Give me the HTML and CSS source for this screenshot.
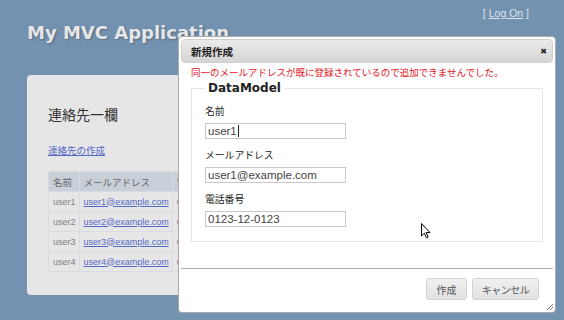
FILE: index.html
```html
<!DOCTYPE html>
<html>
<head>
    <meta content="text/html; charset=UTF-8" http-equiv="content-type">
    <title>連絡先一欄 - My MVC Application</title>
    <link rel="stylesheet" href="styles.css">
</head>
<body>
    <div class="header">
        <h1 class="site-title">My MVC Application</h1>
        <div class="logon">[ <a href="#">Log On</a> ]</div>
    </div>

    <div class="main">
        <h2>連絡先一欄</h2>
        <p class="create-link"><a href="#">連絡先の作成</a></p>

        <table class="contacts">
            <tr>
                <th>名前</th>
                <th>メールアドレス</th>
                <th>電話番号</th>
            </tr>
            <tr>
                <td class="name">user1</td>
                <td><a href="#">user1@example.com</a></td>
                <td>0123-12-0123</td>
            </tr>
            <tr>
                <td class="name">user2</td>
                <td><a href="#">user2@example.com</a></td>
                <td>0123-12-0123</td>
            </tr>
            <tr>
                <td class="name">user3</td>
                <td><a href="#">user3@example.com</a></td>
                <td>0123-12-0123</td>
            </tr>
            <tr>
                <td class="name">user4</td>
                <td><a href="#">user4@example.com</a></td>
                <td>0123-12-0123</td>
            </tr>
        </table>
    </div>

    <!-- modal dialog -->
    <div class="dialog">
        <div class="dialog-titlebar">
            <span class="dialog-title">新規作成</span>
            <span class="dialog-close">&#x2716;</span>
        </div>
        <div class="dialog-content">
            <div class="error">同一のメールアドレスが既に登録されているので追加できませんでした。</div>
            <fieldset>
                <legend>DataModel</legend>
                <div class="field">
                    <div class="field-label">名前</div>
                    <div class="text-box">user1<span class="caret"></span></div>
                </div>
                <div class="field">
                    <div class="field-label">メールアドレス</div>
                    <div class="text-box">user1@example.com</div>
                </div>
                <div class="field">
                    <div class="field-label">電話番号</div>
                    <div class="text-box">0123-12-0123</div>
                </div>
            </fieldset>
        </div>
        <div class="dialog-buttons">
            <button class="btn btn-create">作成</button>
            <button class="btn btn-cancel">キャンセル</button>
        </div>
        <svg class="resize-handle" width="7" height="7" viewBox="0 0 7 7">
            <path d="M1 7 L7 1 M4 7 L7 4" stroke="#777" stroke-width="1" fill="none"/>
        </svg>
    </div>

    <!-- mouse pointer -->
    <svg class="cursor" width="10" height="16" viewBox="0 0 10 16">
        <path d="M0.5 0.5 V13 L3.4 10.2 L5.4 14.8 L7.1 14 L5.1 9.6 H9 Z" fill="#fff" stroke="#000" stroke-width="1" stroke-linejoin="round"/>
    </svg>
</body>
</html>
```

FILE: styles.css
```css
body {
    margin: 0;
    background-color: #7392b0;
    font-family: "Liberation Sans", "Noto Sans CJK JP", sans-serif;
    color: #333;
}

a {
    color: #5368c6;
}

/* page header */
.header {
    display: flex;
    justify-content: space-between;
    align-items: flex-start;
    padding: 0 35px 0 27px;
}

.site-title {
    margin: 22px 0 0 0;
    font-family: "DejaVu Sans", sans-serif;
    font-size: 18px;
    line-height: 22px;
    font-weight: bold;
    color: #e6e6e6;
    text-shadow: 1px 1px 2px rgba(40, 50, 70, 0.45);
}

.logon {
    margin-top: 6px;
    font-size: 10.5px;
    line-height: 14px;
    color: #dde4ec;
}

.logon a {
    color: #dde4ec;
}

/* main panel */
.main {
    margin: 31px 0 0 27px;
    width: 492px;
    height: 220px;
    box-sizing: border-box;
    padding: 31px 21px 0 21px;
    background-color: #e6e6e6;
    border-radius: 4px;
}

.main h2 {
    margin: 0;
    font-size: 14px;
    line-height: 18px;
    font-weight: normal;
    color: #333;
}

.create-link {
    margin: 20px 0 0 0;
    font-size: 9.5px;
    line-height: 14px;
}

.contacts {
    margin-top: 13px;
    border-collapse: collapse;
    font-size: 9px;
}

.contacts th,
.contacts td {
    height: 19px;
    padding: 0 3px 0 4px;
    border: 1px solid #d8dce2;
    text-align: left;
    white-space: nowrap;
}

.contacts th {
    background-color: #c8cfd8;
    font-weight: normal;
    color: #666;
    font-size: 9.5px;
}

.contacts td {
    color: #808080;
}

.contacts td a {
    color: #5368c6;
}

/* dialog */
.dialog {
    position: absolute;
    left: 178px;
    top: 36px;
    width: 378px;
    height: 277px;
    box-sizing: border-box;
    padding: 2px;
    display: flex;
    flex-direction: column;
    background-color: #fff;
    border: 1px solid #aaa;
    border-radius: 4px;
    color: #222;
}

.dialog-titlebar {
    display: flex;
    justify-content: space-between;
    align-items: center;
    height: 24px;
    box-sizing: border-box;
    padding: 0 5px 0 9px;
    background: linear-gradient(#ebebeb, #d5d5d5);
    border: 1px solid #d0d0d0;
    border-radius: 4px;
}

.dialog-title {
    font-size: 10.5px;
    font-weight: bold;
    color: #222;
}

.dialog-close {
    font-family: "DejaVu Sans", sans-serif;
    font-size: 8px;
    color: #222;
}

.dialog-content {
    flex: 1;
    padding: 3px 10px 0 10px;
}

.error {
    font-size: 9.5px;
    line-height: 14px;
    color: #e3131b;
    white-space: nowrap;
}

fieldset {
    margin: 1px 0 0 0;
    padding: 0 13px 14px 13px;
    border: 1px solid #e6e6e6;
}

legend {
    padding: 0 3px;
    font-family: "DejaVu Sans", sans-serif;
    font-size: 12px;
    line-height: 14px;
    font-weight: bold;
    color: #222;
}

.field {
    margin-top: 11px;
}

.field-label {
    font-size: 9.8px;
    line-height: 12px;
    margin-bottom: 5px;
    color: #222;
}

.text-box {
    width: 141px;
    height: 16px;
    box-sizing: border-box;
    padding: 0 2px;
    border: 1px solid #c8c8c8;
    font-size: 11.5px;
    line-height: 14px;
    color: #444;
}

.caret {
    display: inline-block;
    width: 1px;
    height: 12px;
    margin-left: 1px;
    vertical-align: -2px;
    background-color: #222;
}

.dialog-buttons {
    display: flex;
    justify-content: flex-end;
    gap: 5px;
    height: 42px;
    box-sizing: border-box;
    padding: 9px 14px 0 0;
    border-top: 1px solid #aaa;
}

.btn {
    height: 22px;
    padding: 0;
    font-family: "Liberation Sans", "Noto Sans CJK JP", sans-serif;
    font-size: 10px;
    color: #555;
    background: linear-gradient(#f0f0f0, #e2e2e2);
    border: 1px solid #d3d3d3;
    border-radius: 3px;
}

.btn-create {
    width: 41px;
}

.btn-cancel {
    width: 67px;
    letter-spacing: -0.5px;
}

.resize-handle {
    position: absolute;
    right: 2px;
    bottom: 2px;
}

.cursor {
    position: absolute;
    left: 421px;
    top: 223px;
}
```
